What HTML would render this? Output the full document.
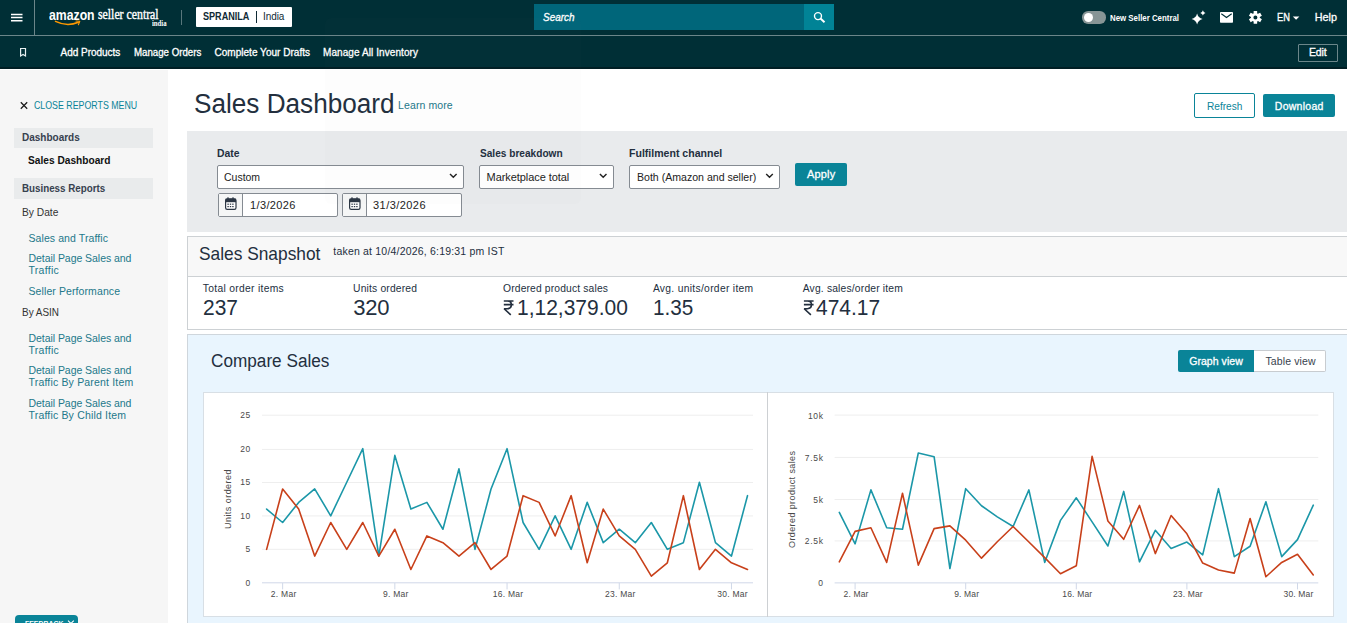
<!DOCTYPE html>
<html><head><meta charset="utf-8"><title>Sales Dashboard</title>
<style>
html,body{margin:0;padding:0;}
body{width:1347px;height:623px;overflow:hidden;background:#fff;position:relative;font-family:"Liberation Sans",sans-serif;}
.t{position:absolute;white-space:nowrap;line-height:1;}
.r{position:absolute;box-sizing:border-box;}
svg{position:absolute;left:0;top:0;overflow:visible;}
#w{position:absolute;left:0;top:0;width:1347px;height:623px;overflow:hidden;background:#fff;}
</style></head><body>
<div id="w">
<div class="r" style="left:0px;top:0px;width:1347.00px;height:68.70px;background:#002f36;"></div>
<div class="r" style="left:0px;top:67.4px;width:1347.00px;height:1.30px;background:#001e24;"></div>
<div class="r" style="left:0px;top:35px;width:1347.00px;height:1.00px;background:rgba(255,255,255,.42);"></div>
<div class="r" style="left:34px;top:0px;width:1.00px;height:35.00px;background:rgba(255,255,255,.42);"></div>
<div class="r" style="left:0px;top:70px;width:168.00px;height:553.00px;background:#f6f6f6;"></div>
<svg width="1347" height="70"><g stroke="#fff" stroke-width="1.5"><path d="M11 14.5H22.5M11 17.6H22.5M11 20.7H22.5"/></g></svg>
<div class="t" style="left:49.00px;top:8.30px;font-size:14px;color:#fff;letter-spacing:0.000px;font-weight:700;transform-origin:0 0;transform:scaleX(0.8748);">amazon</div>
<div class="t" style="left:98.00px;top:7.05px;font-size:14.5px;color:#fff;letter-spacing:0.000px;font-family:'Liberation Serif',serif;-webkit-text-stroke:0.4px #fff;transform-origin:0 0;transform:scaleX(0.8138);">seller central</div>
<div class="t" style="left:152.00px;top:20.05px;font-size:7.5px;color:#fff;letter-spacing:0.000px;font-weight:700;font-family:'Liberation Serif',serif;transform-origin:0 0;transform:scaleX(0.8979);">india</div>
<svg width="1347" height="70"><path d="M55.5 21.4 Q67 27 78.4 22.3" fill="none" stroke="#f90" stroke-width="1.5" stroke-linecap="round"/><path d="M76 21 L79.8 21.3 L78.4 24.7" fill="none" stroke="#f90" stroke-width="1.1" stroke-linejoin="round" stroke-linecap="round"/></svg>
<div class="r" style="left:181px;top:10px;width:1.00px;height:14.50px;background:rgba(255,255,255,.35);"></div>
<div class="r" style="left:196px;top:7.3px;width:95.80px;height:19.40px;background:#fff;border-radius:1px;"></div>
<div class="t" style="left:203.00px;top:11.80px;font-size:10px;color:#0f2a35;letter-spacing:0.000px;font-weight:700;transform-origin:0 0;transform:scaleX(0.9078);">SPRANILA</div>
<div class="r" style="left:256px;top:11.2px;width:1.20px;height:11.80px;background:#0f2a35;"></div>
<div class="t" style="left:263.00px;top:11.80px;font-size:10px;color:#0f2a35;letter-spacing:-0.071px;">India</div>
<div class="r" style="left:534px;top:4.2px;width:300.00px;height:25.70px;background:#00667a;"></div>
<div class="r" style="left:804.2px;top:4.2px;width:29.80px;height:25.70px;background:#018396;"></div>
<div class="t" style="left:542.50px;top:12.05px;font-size:10.5px;color:#fff;letter-spacing:0.000px;font-style:italic;-webkit-text-stroke:0.3px #fff;transform-origin:0 0;transform:scaleX(0.9468);">Search</div>
<svg width="1347" height="70"><circle cx="818" cy="16.1" r="3.5" fill="none" stroke="#fff" stroke-width="1.4"/><path d="M820.5 18.6L824.5 22.2" stroke="#fff" stroke-width="2" stroke-linecap="butt"/></svg>
<div class="r" style="left:1081.7px;top:11.3px;width:24.30px;height:12.30px;background:#879596;border-radius:6.2px;"></div>
<div class="r" style="left:1083.9px;top:12.7px;width:9.30px;height:9.30px;background:#fff;border-radius:50%;"></div>
<div class="t" style="left:1110.00px;top:14.05px;font-size:8.5px;color:#fff;letter-spacing:0.000px;font-weight:700;transform-origin:0 0;transform:scaleX(0.9244);">New Seller Central</div>
<svg width="1347" height="70"><path fill="#fff" d="M1197.1 13.5 Q1198.16 17.94 1202.6 19.0 Q1198.16 20.06 1197.1 24.5 Q1196.04 20.06 1191.6 19.0 Q1196.04 17.94 1197.1 13.5Z M1202.9 10.3 Q1203.39 12.41 1205.5 12.9 Q1203.39 13.39 1202.9 15.5 Q1202.41 13.39 1200.3000000000002 12.9 Q1202.41 12.41 1202.9 10.3Z"/></svg>
<svg width="1347" height="70"><rect x="1220" y="12" width="13" height="10.8" rx="0.8" fill="#fff"/><path d="M1221.3 13.8 L1226.5 17.5 L1231.7 13.8" fill="none" stroke="#002f36" stroke-width="1.1"/></svg>
<svg width="1347" height="70"><path fill="#fff" fill-rule="evenodd" d="M1253.61 13.38 L1253.67 10.93 L1257.13 10.93 L1257.19 13.38 L1257.99 13.84 L1260.14 12.66 L1261.87 15.67 L1259.78 16.94 L1259.78 17.86 L1261.87 19.13 L1260.14 22.14 L1257.99 20.96 L1257.19 21.42 L1257.13 23.87 L1253.67 23.87 L1253.61 21.42 L1252.81 20.96 L1250.66 22.14 L1248.93 19.13 L1251.02 17.86 L1251.02 16.94 L1248.93 15.67 L1250.66 12.66 L1252.81 13.84Z M1257.40 17.40 A2.0 2.0 0 1 0 1253.40 17.40 A2.0 2.0 0 1 0 1257.40 17.40Z"/></svg>
<div class="t" style="left:1276.70px;top:12.80px;font-size:10px;color:#fff;letter-spacing:0.000px;-webkit-text-stroke:0.3px #fff;transform-origin:0 0;transform:scaleX(0.9286);">EN</div>
<svg width="1347" height="70"><path fill="#fff" d="M1292.8 16.4H1299.4L1296.1 19.8Z"/></svg>
<div class="t" style="left:1314.70px;top:11.90px;font-size:10.8px;color:#fff;letter-spacing:-0.004px;-webkit-text-stroke:0.3px #fff;">Help</div>
<svg width="1347" height="70"><path d="M20.6 48.5H25.5V56L23.05 54.4L20.6 56Z" fill="none" stroke="#e8f0f1" stroke-width="1.2" stroke-linejoin="miter"/></svg>
<div class="t" style="left:60.60px;top:47.80px;font-size:10px;color:#fff;letter-spacing:-0.030px;-webkit-text-stroke:0.3px #fff;">Add Products</div>
<div class="t" style="left:133.60px;top:47.80px;font-size:10px;color:#fff;letter-spacing:0.000px;-webkit-text-stroke:0.3px #fff;transform-origin:0 0;transform:scaleX(0.9687);">Manage Orders</div>
<div class="t" style="left:214.50px;top:47.80px;font-size:10px;color:#fff;letter-spacing:0.024px;-webkit-text-stroke:0.3px #fff;">Complete Your Drafts</div>
<div class="t" style="left:323.00px;top:47.80px;font-size:10px;color:#fff;letter-spacing:0.085px;-webkit-text-stroke:0.3px #fff;">Manage All Inventory</div>
<div class="r" style="left:1298px;top:44px;width:40.00px;height:18.00px;border:1px solid rgba(255,255,255,.42);border-radius:1px;"></div>
<div class="t" style="left:1309.00px;top:47.05px;font-size:10.5px;color:#fff;letter-spacing:-0.131px;-webkit-text-stroke:0.3px #fff;">Edit</div>
<svg width="200" height="623"><path d="M20.8 102.3L27.2 108.7M27.2 102.3L20.8 108.7" stroke="#1a1a1a" stroke-width="1.25"/></svg>
<div class="t" style="left:34.10px;top:100.70px;font-size:10.2px;color:#0a8498;letter-spacing:0.000px;transform-origin:0 0;transform:scaleX(0.8651);">CLOSE REPORTS MENU</div>
<div class="r" style="left:13.9px;top:127.8px;width:139.30px;height:20.20px;background:#e9ebec;"></div>
<div class="t" style="left:21.80px;top:131.65px;font-size:11.3px;color:#37414f;letter-spacing:0.000px;font-weight:700;transform-origin:0 0;transform:scaleX(0.8851);">Dashboards</div>
<div class="t" style="left:28.30px;top:154.80px;font-size:11px;color:#111;letter-spacing:0.000px;font-weight:700;transform-origin:0 0;transform:scaleX(0.9243);">Sales Dashboard</div>
<div class="r" style="left:13.9px;top:178px;width:139.30px;height:20.70px;background:#e9ebec;"></div>
<div class="t" style="left:21.80px;top:182.65px;font-size:11.3px;color:#37414f;letter-spacing:0.000px;font-weight:700;transform-origin:0 0;transform:scaleX(0.8660);">Business Reports</div>
<div class="t" style="left:21.80px;top:207.05px;font-size:10.5px;color:#333;letter-spacing:0.000px;transform-origin:0 0;transform:scaleX(0.9746);">By Date</div>
<div class="t" style="left:28.50px;top:233.05px;font-size:10.5px;color:#22788a;letter-spacing:0.086px;">Sales and Traffic</div>
<div class="t" style="left:28.50px;top:253.05px;font-size:10.5px;color:#22788a;letter-spacing:-0.050px;">Detail Page Sales and</div>
<div class="t" style="left:28.50px;top:265.05px;font-size:10.5px;color:#22788a;letter-spacing:0.285px;">Traffic</div>
<div class="t" style="left:28.50px;top:286.05px;font-size:10.5px;color:#22788a;letter-spacing:0.096px;">Seller Performance</div>
<div class="t" style="left:21.80px;top:307.05px;font-size:10.5px;color:#333;letter-spacing:0.000px;transform-origin:0 0;transform:scaleX(0.9463);">By ASIN</div>
<div class="t" style="left:28.50px;top:333.05px;font-size:10.5px;color:#22788a;letter-spacing:-0.050px;">Detail Page Sales and</div>
<div class="t" style="left:28.50px;top:345.05px;font-size:10.5px;color:#22788a;letter-spacing:0.285px;">Traffic</div>
<div class="t" style="left:28.50px;top:365.05px;font-size:10.5px;color:#22788a;letter-spacing:-0.050px;">Detail Page Sales and</div>
<div class="t" style="left:28.50px;top:377.05px;font-size:10.5px;color:#22788a;letter-spacing:0.179px;">Traffic By Parent Item</div>
<div class="t" style="left:28.50px;top:398.05px;font-size:10.5px;color:#22788a;letter-spacing:-0.050px;">Detail Page Sales and</div>
<div class="t" style="left:28.50px;top:410.05px;font-size:10.5px;color:#22788a;letter-spacing:0.178px;">Traffic By Child Item</div>
<div class="r" style="left:14.5px;top:615px;width:63.20px;height:25.00px;background:#0a8498;border-radius:4px 4px 0 0;"></div>
<div class="t" style="left:24.50px;top:619.80px;font-size:8px;color:#fff;letter-spacing:0.000px;font-weight:700;transform-origin:0 0;transform:scaleX(0.8662);">FEEDBACK</div>
<svg width="200" height="623"><path d="M68 620.6L73.8 626.4M73.8 620.6L68 626.4" stroke="#fff" stroke-width="1.1"/></svg>
<div class="t" style="left:193.70px;top:90.80px;font-size:27px;color:#232f3e;letter-spacing:0.000px;transform-origin:0 0;transform:scaleX(0.9685);">Sales Dashboard</div>
<div class="t" style="left:398.10px;top:100.05px;font-size:10.5px;color:#22788a;letter-spacing:0.089px;">Learn more</div>
<div class="r" style="left:1194px;top:93px;width:61.00px;height:25.00px;background:#fff;border:1px solid #0a8498;border-radius:2px;"></div>
<div class="t" style="left:1207.00px;top:101.05px;font-size:10.5px;color:#0a8498;letter-spacing:0.000px;transform-origin:0 0;transform:scaleX(0.9629);">Refresh</div>
<div class="r" style="left:1263px;top:94px;width:72.00px;height:23.00px;background:#0a8498;border-radius:2px;"></div>
<div class="t" style="left:1274.80px;top:101.05px;font-size:10.5px;color:#fff;letter-spacing:0.272px;-webkit-text-stroke:0.3px #fff;">Download</div>
<div class="r" style="left:187px;top:131px;width:1160.00px;height:101.00px;background:#e9ebed;"></div>
<div class="t" style="left:217.00px;top:147.55px;font-size:11.5px;color:#232f3e;letter-spacing:0.000px;font-weight:700;transform-origin:0 0;transform:scaleX(0.9027);">Date</div>
<div class="t" style="left:479.60px;top:147.55px;font-size:11.5px;color:#232f3e;letter-spacing:0.000px;font-weight:700;transform-origin:0 0;transform:scaleX(0.8791);">Sales breakdown</div>
<div class="t" style="left:629.40px;top:147.55px;font-size:11.5px;color:#232f3e;letter-spacing:0.000px;font-weight:700;transform-origin:0 0;transform:scaleX(0.9174);">Fulfilment channel</div>
<div class="r" style="left:217px;top:165px;width:247.00px;height:24.00px;background:#fff;border:1px solid #858b92;border-radius:2px;"></div>
<div class="r" style="left:479px;top:165px;width:135.00px;height:24.00px;background:#fff;border:1px solid #858b92;border-radius:2px;"></div>
<div class="r" style="left:629px;top:165px;width:151.00px;height:24.00px;background:#fff;border:1px solid #858b92;border-radius:2px;"></div>
<div class="t" style="left:224.00px;top:171.80px;font-size:11px;color:#222;letter-spacing:0.000px;transform-origin:0 0;transform:scaleX(0.9525);">Custom</div>
<div class="t" style="left:486.60px;top:171.80px;font-size:11px;color:#222;letter-spacing:-0.073px;">Marketplace total</div>
<div class="t" style="left:636.60px;top:171.80px;font-size:11px;color:#222;letter-spacing:0.000px;transform-origin:0 0;transform:scaleX(0.9604);">Both (Amazon and seller)</div>
<svg width="1347" height="623"><path d="M450.0 173.89999999999998L453.3 177.29999999999998L456.6 173.89999999999998" fill="none" stroke="#222" stroke-width="1.4"/><path d="M599.9000000000001 173.89999999999998L603.2 177.29999999999998L606.5 173.89999999999998" fill="none" stroke="#222" stroke-width="1.4"/><path d="M766.2 173.89999999999998L769.5 177.29999999999998L772.8 173.89999999999998" fill="none" stroke="#222" stroke-width="1.4"/></svg>
<div class="r" style="left:218px;top:193px;width:120.00px;height:24.00px;background:#fff;border:1px solid #858b92;border-radius:2px;"></div>
<div class="r" style="left:219px;top:194px;width:24.00px;height:22.00px;background:#f5f6f6;border-right:1px solid #858b92;"></div>
<div class="t" style="left:250.00px;top:199.80px;font-size:11px;color:#222;letter-spacing:0.369px;">1/3/2026</div>
<svg width="1347" height="623"><rect x="225.6" y="198.79999999999998" width="10.4" height="10.6" rx="1.6" fill="#fff" stroke="#2b3644" stroke-width="1.2"/><rect x="225.6" y="198.79999999999998" width="10.4" height="3.4" fill="#2b3644"/><path d="M228.0 197.2V199.6M233.0 197.2V199.6" stroke="#2b3644" stroke-width="1.2"/><g fill="#2b3644"><rect x="227.4" y="203.6" width="1.4" height="1.2"/><rect x="229.8" y="203.6" width="1.4" height="1.2"/><rect x="232.2" y="203.6" width="1.4" height="1.2"/><rect x="227.4" y="206.0" width="1.4" height="1.2"/><rect x="229.8" y="206.0" width="1.4" height="1.2"/><rect x="232.2" y="206.0" width="1.4" height="1.2"/></g></svg>
<div class="r" style="left:342px;top:193px;width:120.00px;height:24.00px;background:#fff;border:1px solid #858b92;border-radius:2px;"></div>
<div class="r" style="left:343px;top:194px;width:24.00px;height:22.00px;background:#f5f6f6;border-right:1px solid #858b92;"></div>
<div class="t" style="left:373.00px;top:199.80px;font-size:11px;color:#222;letter-spacing:0.445px;">31/3/2026</div>
<svg width="1347" height="623"><rect x="349.6" y="198.79999999999998" width="10.4" height="10.6" rx="1.6" fill="#fff" stroke="#2b3644" stroke-width="1.2"/><rect x="349.6" y="198.79999999999998" width="10.4" height="3.4" fill="#2b3644"/><path d="M352.0 197.2V199.6M357.0 197.2V199.6" stroke="#2b3644" stroke-width="1.2"/><g fill="#2b3644"><rect x="351.4" y="203.6" width="1.4" height="1.2"/><rect x="353.8" y="203.6" width="1.4" height="1.2"/><rect x="356.2" y="203.6" width="1.4" height="1.2"/><rect x="351.4" y="206.0" width="1.4" height="1.2"/><rect x="353.8" y="206.0" width="1.4" height="1.2"/><rect x="356.2" y="206.0" width="1.4" height="1.2"/></g></svg>
<div class="r" style="left:795px;top:163px;width:52.00px;height:23.00px;background:#0a8498;border-radius:2px;"></div>
<div class="t" style="left:806.90px;top:168.80px;font-size:11px;color:#fff;letter-spacing:0.196px;-webkit-text-stroke:0.3px #fff;">Apply</div>
<div class="r" style="left:187px;top:236px;width:1173.00px;height:94.00px;background:#fff;border:1px solid #cdd1d4;"></div>
<div class="r" style="left:188px;top:237px;width:1159.00px;height:40.00px;background:#f8f8f8;border-bottom:1px solid #cdd1d4;"></div>
<div class="t" style="left:199.40px;top:244.30px;font-size:19px;color:#232f3e;letter-spacing:0.000px;transform-origin:0 0;transform:scaleX(0.9121);">Sales Snapshot</div>
<div class="t" style="left:333.30px;top:246.05px;font-size:10.5px;color:#232f3e;letter-spacing:0.194px;">taken at 10/4/2026, 6:19:31 pm IST</div>
<div class="t" style="left:202.80px;top:283.65px;font-size:10.3px;color:#232f3e;letter-spacing:0.304px;">Total order items</div>
<div class="t" style="left:353.10px;top:283.65px;font-size:10.3px;color:#232f3e;letter-spacing:0.164px;">Units ordered</div>
<div class="t" style="left:503.00px;top:283.65px;font-size:10.3px;color:#232f3e;letter-spacing:0.155px;">Ordered product sales</div>
<div class="t" style="left:652.90px;top:283.65px;font-size:10.3px;color:#232f3e;letter-spacing:0.302px;">Avg. units/order item</div>
<div class="t" style="left:802.70px;top:283.65px;font-size:10.3px;color:#232f3e;letter-spacing:0.182px;">Avg. sales/order item</div>
<div class="t" style="left:203.30px;top:296.80px;font-size:22px;color:#232f3e;letter-spacing:0.000px;transform-origin:0 0;transform:scaleX(0.9535);">237</div>
<div class="t" style="left:353.30px;top:296.80px;font-size:22px;color:#232f3e;letter-spacing:-0.253px;">320</div>
<svg width="1347" height="623"><path d="M503.8 301.0H513.5 M503.8 304.61H513.5 M504.1 301.0H507.486 Q511.366 301.0 511.366 304.61 Q511.366 308.726 507.29200000000003 308.726 H504.1 L510.784 314.9" fill="none" stroke="#232f3e" stroke-width="1.6" stroke-linejoin="bevel"/></svg>
<div class="t" style="left:516.50px;top:296.80px;font-size:22px;color:#232f3e;letter-spacing:0.000px;transform-origin:0 0;transform:scaleX(0.9542);">1,12,379.00</div>
<div class="t" style="left:653.20px;top:296.80px;font-size:22px;color:#232f3e;letter-spacing:0.000px;transform-origin:0 0;transform:scaleX(0.9412);">1.35</div>
<svg width="1347" height="623"><path d="M803.9 301.0H813.6 M803.9 304.61H813.6 M804.1999999999999 301.0H807.586 Q811.466 301.0 811.466 304.61 Q811.466 308.726 807.3919999999999 308.726 H804.1999999999999 L810.884 314.9" fill="none" stroke="#232f3e" stroke-width="1.6" stroke-linejoin="bevel"/></svg>
<div class="t" style="left:816.40px;top:296.80px;font-size:22px;color:#232f3e;letter-spacing:0.000px;transform-origin:0 0;transform:scaleX(0.9526);">474.17</div>
<div class="r" style="left:187px;top:334px;width:1173.00px;height:306.00px;background:#e9f5fe;border:1px solid #cfd6dc;"></div>
<div class="t" style="left:210.60px;top:352.30px;font-size:18px;color:#232f3e;letter-spacing:0.000px;transform-origin:0 0;transform:scaleX(0.9544);">Compare Sales</div>
<div class="r" style="left:1177.9px;top:350.3px;width:75.80px;height:21.30px;background:#0a8498;border-radius:2px 0 0 2px;"></div>
<div class="t" style="left:1189.20px;top:356.05px;font-size:10.5px;color:#fff;letter-spacing:0.055px;-webkit-text-stroke:0.3px #fff;">Graph view</div>
<div class="r" style="left:1253.7px;top:350.3px;width:71.90px;height:21.30px;background:#fff;border:1px solid #c8ccd0;border-left:none;border-radius:0 2px 2px 0;"></div>
<div class="t" style="left:1265.40px;top:356.05px;font-size:10.5px;color:#37414d;letter-spacing:0.131px;">Table view</div>
<div class="r" style="left:203px;top:392px;width:1131.00px;height:225.00px;background:#fff;border:1px solid #d8dfe5;"></div>
<div class="r" style="left:767px;top:392px;width:1.00px;height:225.00px;background:#cdd0d3;"></div>
<svg width="1347" height="623"><path d="M262 582.80H753" stroke="#d0d8e8" stroke-width="1"/><path d="M262 549.30H753" stroke="#eeeeee" stroke-width="1"/><path d="M262 515.90H753" stroke="#eeeeee" stroke-width="1"/><path d="M262 482.50H753" stroke="#eeeeee" stroke-width="1"/><path d="M262 449.40H753" stroke="#eeeeee" stroke-width="1"/><path d="M262 415.20H753" stroke="#eeeeee" stroke-width="1"/><path d="M282.63 582.9V589.4" stroke="#d0d8e8" stroke-width="1"/><path d="M394.84 582.9V589.4" stroke="#d0d8e8" stroke-width="1"/><path d="M507.05 582.9V589.4" stroke="#d0d8e8" stroke-width="1"/><path d="M619.26 582.9V589.4" stroke="#d0d8e8" stroke-width="1"/><path d="M731.47 582.9V589.4" stroke="#d0d8e8" stroke-width="1"/><polyline points="266.60,509.09 282.63,522.51 298.66,502.38 314.69,488.96 330.72,515.80 346.75,482.25 362.78,448.70 378.81,556.06 394.84,455.41 410.87,509.09 426.90,502.38 442.93,529.22 458.96,468.83 474.99,549.35 491.02,488.96 507.05,448.70 523.08,522.51 539.11,549.35 555.14,515.80 571.17,549.35 587.20,502.38 603.23,542.64 619.26,529.22 635.29,542.64 651.32,522.51 667.35,549.35 683.38,542.64 699.41,482.25 715.44,542.64 731.47,556.06 747.50,495.67" fill="none" stroke="#1b97a8" stroke-width="1.6" stroke-linejoin="round" stroke-linecap="round"/><polyline points="266.60,549.35 282.63,488.96 298.66,509.09 314.69,556.06 330.72,522.51 346.75,549.35 362.78,522.51 378.81,556.06 394.84,529.22 410.87,569.48 426.90,535.93 442.93,542.64 458.96,556.06 474.99,542.64 491.02,569.48 507.05,556.06 523.08,495.67 539.11,502.38 555.14,535.93 571.17,495.67 587.20,562.77 603.23,509.09 619.26,535.93 635.29,549.35 651.32,576.19 667.35,562.77 683.38,495.67 699.41,569.48 715.44,549.35 731.47,562.77 747.50,569.48" fill="none" stroke="#c8401a" stroke-width="1.6" stroke-linejoin="round" stroke-linecap="round"/></svg>
<div class="t" style="left:245.57px;top:579.05px;font-size:8.5px;color:#4a4a4a;letter-spacing:0.000px;">0</div>
<div class="t" style="left:245.57px;top:545.05px;font-size:8.5px;color:#4a4a4a;letter-spacing:0.000px;">5</div>
<div class="t" style="left:240.15px;top:512.05px;font-size:8.5px;color:#4a4a4a;letter-spacing:0.700px;">10</div>
<div class="t" style="left:240.15px;top:478.05px;font-size:8.5px;color:#4a4a4a;letter-spacing:0.700px;">15</div>
<div class="t" style="left:240.15px;top:445.05px;font-size:8.5px;color:#4a4a4a;letter-spacing:0.700px;">20</div>
<div class="t" style="left:240.15px;top:411.05px;font-size:8.5px;color:#4a4a4a;letter-spacing:0.700px;">25</div>
<div class="t" style="left:270.83px;top:590.05px;font-size:8.5px;color:#4a4a4a;letter-spacing:0.262px;">2. Mar</div>
<div class="t" style="left:383.04px;top:590.05px;font-size:8.5px;color:#4a4a4a;letter-spacing:0.262px;">9. Mar</div>
<div class="t" style="left:492.75px;top:590.05px;font-size:8.5px;color:#4a4a4a;letter-spacing:0.264px;">16. Mar</div>
<div class="t" style="left:604.96px;top:590.05px;font-size:8.5px;color:#4a4a4a;letter-spacing:0.264px;">23. Mar</div>
<div class="t" style="left:717.17px;top:590.05px;font-size:8.5px;color:#4a4a4a;letter-spacing:0.264px;">30. Mar</div>
<div class="t" style="left:224.1px;top:528.75px;font-size:9px;color:#4a4a4a;transform-origin:0 0;transform:rotate(-90deg);letter-spacing:0.456px;">Units ordered</div>
<svg width="1347" height="623"><path d="M834.6 582.90H1318.3" stroke="#d0d8e8" stroke-width="1"/><path d="M834.6 540.90H1318.3" stroke="#eeeeee" stroke-width="1"/><path d="M834.6 499.50H1318.3" stroke="#eeeeee" stroke-width="1"/><path d="M834.6 457.40H1318.3" stroke="#eeeeee" stroke-width="1"/><path d="M834.6 415.10H1318.3" stroke="#eeeeee" stroke-width="1"/><path d="M855.10 582.9V589.4" stroke="#d0d8e8" stroke-width="1"/><path d="M965.70 582.9V589.4" stroke="#d0d8e8" stroke-width="1"/><path d="M1076.30 582.9V589.4" stroke="#d0d8e8" stroke-width="1"/><path d="M1186.90 582.9V589.4" stroke="#d0d8e8" stroke-width="1"/><path d="M1297.50 582.9V589.4" stroke="#d0d8e8" stroke-width="1"/><polyline points="839.30,512.44 855.10,543.85 870.90,489.88 886.70,527.71 902.50,529.22 918.30,453.03 934.10,456.67 949.90,568.54 965.70,488.67 981.50,505.73 997.30,516.87 1013.10,526.49 1028.90,489.88 1044.70,562.43 1060.50,520.38 1076.30,497.82 1092.10,521.91 1107.90,546.00 1123.70,491.43 1139.50,561.83 1155.30,530.28 1171.10,548.41 1186.90,542.02 1202.70,554.82 1218.50,488.67 1234.30,556.65 1250.10,546.28 1265.90,501.78 1281.70,556.65 1297.50,539.59 1313.30,505.13" fill="none" stroke="#1b97a8" stroke-width="1.6" stroke-linejoin="round" stroke-linecap="round"/><polyline points="839.30,561.83 855.10,531.35 870.90,527.71 886.70,562.43 902.50,493.25 918.30,565.19 934.10,528.62 949.90,525.87 965.70,540.19 981.50,558.17 997.30,541.72 1013.10,526.49 1028.90,542.02 1044.70,557.57 1060.50,573.71 1076.30,565.79 1092.10,456.38 1107.90,521.00 1123.70,539.28 1139.50,505.45 1155.30,553.61 1171.10,515.50 1186.90,533.78 1202.70,563.04 1218.50,570.05 1234.30,573.10 1250.10,518.55 1265.90,576.76 1281.70,562.43 1297.50,554.21 1313.30,574.95" fill="none" stroke="#c8401a" stroke-width="1.6" stroke-linejoin="round" stroke-linecap="round"/></svg>
<div class="t" style="left:818.27px;top:579.05px;font-size:8.5px;color:#4a4a4a;letter-spacing:0.000px;">0</div>
<div class="t" style="left:804.83px;top:537.05px;font-size:8.5px;color:#4a4a4a;letter-spacing:0.700px;">2.5k</div>
<div class="t" style="left:813.32px;top:496.05px;font-size:8.5px;color:#4a4a4a;letter-spacing:0.700px;">5k</div>
<div class="t" style="left:804.83px;top:454.05px;font-size:8.5px;color:#4a4a4a;letter-spacing:0.700px;">7.5k</div>
<div class="t" style="left:807.90px;top:412.05px;font-size:8.5px;color:#4a4a4a;letter-spacing:0.700px;">10k</div>
<div class="t" style="left:843.60px;top:590.05px;font-size:8.5px;color:#4a4a4a;letter-spacing:0.142px;">2. Mar</div>
<div class="t" style="left:954.20px;top:590.05px;font-size:8.5px;color:#4a4a4a;letter-spacing:0.142px;">9. Mar</div>
<div class="t" style="left:1062.30px;top:590.05px;font-size:8.5px;color:#4a4a4a;letter-spacing:0.164px;">16. Mar</div>
<div class="t" style="left:1172.90px;top:590.05px;font-size:8.5px;color:#4a4a4a;letter-spacing:0.164px;">23. Mar</div>
<div class="t" style="left:1283.50px;top:590.05px;font-size:8.5px;color:#4a4a4a;letter-spacing:0.164px;">30. Mar</div>
<div class="t" style="left:787.7px;top:547.5px;font-size:9px;color:#4a4a4a;transform-origin:0 0;transform:rotate(-90deg);letter-spacing:0.398px;">Ordered product sales</div>
<div class="r" style="left:324.7px;top:17.7px;width:256.80px;height:186.50px;background:rgba(120,135,140,.014);border-radius:6px;"></div>
</div>
</body></html>
